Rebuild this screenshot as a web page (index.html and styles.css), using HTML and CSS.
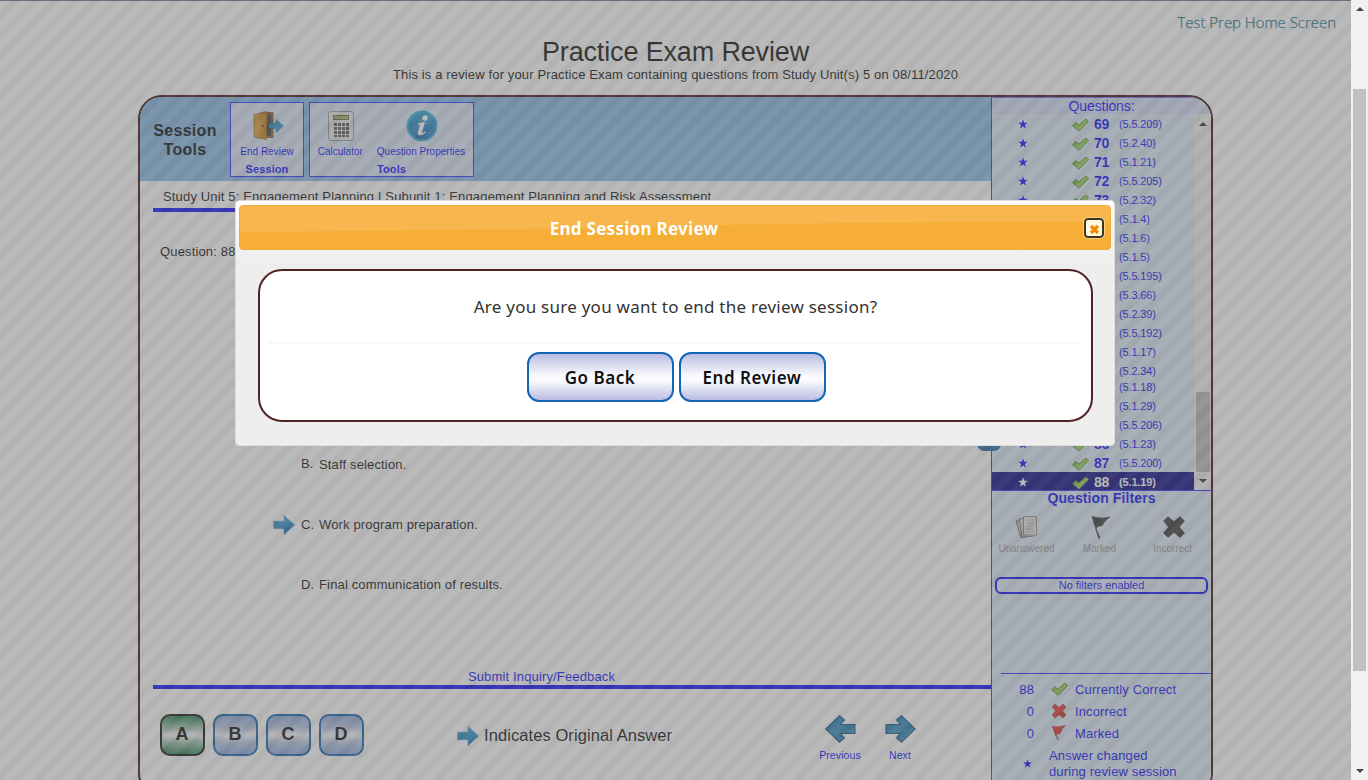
FILE: index.html
```html
<!DOCTYPE html>
<html lang="en">
<head>
<meta charset="utf-8">
<title>Practice Exam Review</title>
<link rel="stylesheet" href="styles.css">
</head>
<body>
<svg class="defs" width="0" height="0">
  <defs>
    <linearGradient id="gGreen" x1="0" y1="0" x2="1" y2="1"><stop offset="0" stop-color="#5fa02a"/><stop offset=".5" stop-color="#86cc40"/><stop offset="1" stop-color="#b5dc8c"/></linearGradient>
    <linearGradient id="gBlue" x1="0" y1="0" x2="0" y2="1"><stop offset="0" stop-color="#30a4dc"/><stop offset="1" stop-color="#1466b0"/></linearGradient>
    <linearGradient id="gDoor" x1="0" y1="0" x2="1" y2="0"><stop offset="0" stop-color="#e8a030"/><stop offset="1" stop-color="#c07818"/></linearGradient>
    <symbol id="check" viewBox="0 0 16 13"><path d="M.6 7.200 3.500 4.200 6.400 6.600 13.200.8 15.600 3.200 6.600 12.400z" fill="url(#gGreen)" stroke="#4a8428" stroke-width=".9" stroke-linejoin="round"/></symbol>
    <symbol id="star" viewBox="0 0 10 10"><path d="M5 .3 6.200 3.700 9.800 3.800 6.900 6 8 9.500 5 7.400 2 9.500 3.100 6 .2 3.800 3.800 3.700z" fill="currentColor"/></symbol>
    <symbol id="cross" viewBox="0 0 24 24"><path d="M1.500 6 6 1.500l6 5 6-5L22.500 6l-5 6 5 6-4.500 4.500-6-5-6 5L1.500 18l5-6z" fill="currentColor" stroke-linejoin="round" stroke="#000" stroke-opacity=".35" stroke-width="1"/></symbol>
    <symbol id="arrow" viewBox="0 0 22 20"><path d="M.8 6.300H11V.4L21.500 10 11 19.600v-5.900H.8z" fill="url(#gBlue)" stroke="#3c9cd4" stroke-width=".7"/></symbol>
    <symbol id="navarrow" viewBox="0 0 31 28"><path d="M1 9.500H15.500L11.500 5 16.500.8 30.200 14 16.500 27.200 11.500 23l4-4.500H1z" fill="#2080b4" stroke="#0c4c7c" stroke-width="1.100"/><path d="M2 14.500H29L16.500 26 13 23l4-5.500H2z" fill="#3aa0c8" fill-opacity=".3"/></symbol>
  </defs>
</svg>
<div class="page">
  <div class="top"><a class="home">Test Prep Home Screen</a></div>
  <h1>Practice Exam Review</h1>
  <p class="sub">This is a review for your Practice Exam containing questions from Study Unit(s) 5 on 08/11/2020</p>

  <div class="panel">
    <main class="main">
      <div class="toolbar">
        <div class="tt">Session<br>Tools</div>
        <div class="group g1">
          <div class="tools">
            <div class="tool"><svg width="32" height="32" viewBox="0 0 32 32"><path d="M9 2h12.500v26H9z" fill="#7a542c"/><path d="M14 5h5v21h-5z" fill="#41342c"/><path d="M2 4.500 14.500 1.500v28L2 27z" fill="url(#gDoor)" stroke="#9c6518" stroke-width=".8"/><circle cx="11" cy="16" r="1.300" fill="#70330c"/><path d="M17 13.500h7V9.500l7.500 6.500-7.500 6.500v-4h-7z" fill="#238cc8" stroke="#176ca0" stroke-width=".6"/></svg><span>End Review</span></div>
          </div>
          <b>Session</b>
        </div>
        <div class="group g2">
          <div class="tools">
            <div class="tool"><svg width="32" height="32" viewBox="0 0 32 32"><rect x="3.500" y="1.500" width="25" height="29" rx="2.500" fill="#e6e6e6" stroke="#939393"/><rect x="8.500" y="5.500" width="15" height="4" fill="#9cad59" stroke="#5c6630"/><g fill="#4c4c4c"><path d="M9 13h3v3H9zM13 13h3v3h-3zM17 13h3v3h-3zM21 13h3v3h-3zM9 17h3v3H9zM13 17h3v3h-3zM17 17h3v3h-3zM21 17h3v3h-3zM9 21h3v3H9zM13 21h3v3h-3zM17 21h3v3h-3zM21 21h3v3h-3zM9 25h3v2H9zM13 25h3v2h-3zM17 25h3v2h-3zM21 25h3v2h-3z"/></g></svg><span>Calculator</span></div>
            <div class="tool qp"><svg width="32" height="32" viewBox="0 0 32 32"><circle cx="16" cy="16" r="14.500" fill="url(#gBlue)" stroke="#2bb2dc" stroke-width="2"/><circle cx="19" cy="8" r="2.700" fill="#fff"/><path d="M12 13.500q4-1.700 7-1.500l-2.800 10.200q0 1.300 3.300-.9l.5 1.200q-7 5-8.500 1.300l2.500-9.300-2.300.1z" fill="#fff"/></svg><span>Question Properties</span></div>
          </div>
          <b>Tools</b>
        </div>
      </div>
      <div class="crumb">Study Unit 5: Engagement Planning | Subunit 1: Engagement Planning and Risk Assessment</div>
      <div class="content">
        <div class="qn">Question: 88</div>
        <div class="opt"><i></i><span class="l up">B.</span><span>Staff selection.</span></div>
        <div class="opt"><i><svg width="22" height="20"><use href="#arrow"/></svg></i><span class="l">C.</span><span>Work program preparation.</span></div>
        <div class="opt"><i></i><span class="l">D.</span><span>Final communication of results.</span></div>
        <div class="submit">Submit Inquiry/Feedback</div>
      </div>
      <div class="bottom">
        <div class="answers"><span class="ans sel">A</span><span class="ans">B</span><span class="ans">C</span><span class="ans">D</span></div>
        <div class="orig"><svg width="22" height="20"><use href="#arrow"/></svg><span>Indicates Original Answer</span></div>
        <div class="nav"><svg class="flip" width="31" height="28"><use href="#navarrow"/></svg><span>Previous</span></div>
        <div class="nav nx"><svg width="31" height="28"><use href="#navarrow"/></svg><span>Next</span></div>
      </div>
    </main>
    <aside class="side">
      <div class="qh">Questions:</div>
      <div class="listwrap">
        <div class="list" id="list"></div>
        <div class="sb"><span class="up-a"></span><span class="thumb"></span><span class="dn-a"></span></div>
      </div>
      <div class="filters">
        <b class="ft">Question Filters</b>
        <div class="fi">
          <div><svg width="26" height="24" viewBox="0 0 26 24"><path d="m2 6 10-3 5 18-10 2z" fill="#c2c2c2" stroke="#6f6f6f"/><path d="m5 4 12-2 3 19-12 1z" fill="#d0d0d0" stroke="#767676"/><path d="M9.500 1.500h13v18.500h-13z" fill="#e4e4e4" stroke="#888"/><path d="M12 5h8M12 8h8M12 11h8M12 14h8M12 17h8" stroke="#b4b4b4"/></svg><span>Unanswered</span></div>
          <div><svg width="24" height="24" viewBox="0 0 24 24"><path d="M4 1.500q9 3 18 .5-6 4-8 9-4-1-6 2.500l4 9.500-1.300.2z" fill="#303030" stroke="#202020" stroke-width=".6"/></svg><span>Marked</span></div>
          <div class="gx"><svg width="24" height="24"><use href="#cross"/></svg><span>Incorrect</span></div>
        </div>
        <div class="none">No filters enabled</div>
      </div>
      <div class="legend">
        <div><em>88</em><svg width="17" height="14"><use href="#check"/></svg><span>Currently Correct</span></div>
        <div><em>0</em><svg class="red" width="16" height="16"><use href="#cross"/></svg><span>Incorrect</span></div>
        <div><em>0</em><svg width="16" height="16" viewBox="0 0 16 16"><path d="m2 1 5 14" stroke="#9c7040" stroke-width="1.500"/><path d="M1.500 1.500q6 1 13-1-4 3-5.500 8-3-.5-4.500 2z" fill="#dc2020" stroke="#9a2020" stroke-width=".5"/></svg><span>Marked</span></div>
        <div class="chg"><em><svg width="9" height="9"><use href="#star"/></svg></em><span>Answer changed<br>during review session</span></div>
      </div>
    </aside>
    <span class="tab"></span>
  </div>
</div>
<div class="overlay"></div>
<section class="dialog">
  <header><svg class="wave" viewBox="0 0 872 45" preserveAspectRatio="none"><path d="M0 0H872V17Q650 16 436 21T0 27z" fill="#f8b64e"/></svg><h2>End Session Review</h2><button class="x"><svg width="11" height="11" viewBox="0 0 11 11"><path d="m2 2 7 7M9 2 2 9" stroke="#ef8c08" stroke-width="3.200"/></svg></button></header>
  <div class="box">
    <p>Are you sure you want to end the review session?</p>
    <div class="btns"><button>Go Back</button><button>End Review</button></div>
  </div>
</section>
<div class="scroll"><span class="s-up"></span><span class="s-thumb"></span><span class="s-dn"></span></div>
<script src="list.js"></script>
</body>
</html>
```
FILE: list.js
```js
const units = ["5.5.209", "5.2.40", "5.1.21", "5.5.205", "5.2.32", "5.1.4", "5.1.6", "5.1.5", "5.5.195", "5.3.66", "5.2.39", "5.5.192", "5.1.17", "5.2.34", "5.1.18", "5.1.29", "5.5.206", "5.1.23", "5.5.200", "5.1.19"];
document.getElementById("list").innerHTML = units.map((u, i) => {
  const n = 69 + i;
  const cls = n === 88 ? "row current" : n === 83 ? "row tight" : "row";
  return `<div class="${cls}"><svg class="st" width="10" height="10"><use href="#star"/></svg><svg class="ck" width="17" height="14"><use href="#check"/></svg><b>${n}</b><span>(${u})</span></div>`;
}).join("");
```
FILE: styles.css
```css
* { box-sizing: border-box; }
html, body { height: 780px; overflow: hidden; }
body { margin: 0; position: relative; background: #fff; font-family: "Liberation Sans", Arial, sans-serif; color: #000; }
.defs { position: absolute; }
svg { display: block; }
.page { width: 1351px; height: 780px; overflow: hidden; background: #fff; border-top: 1px solid #668; }
.top { height: 36px; padding: 11px 15px 0; text-align: right; }
.home { font: 400 15px/20px "Open Sans", sans-serif; letter-spacing: -.27px; color: #1c7492; font-weight: 300; letter-spacing: -.03px; -webkit-text-stroke: .25px #006486; }
h1 { margin: 0; text-align: center; font-weight: 400; font-size: 27px; line-height: 30px; letter-spacing: -.15px; }
.sub { margin: 0; text-align: center; font-size: 13px; line-height: 16px; letter-spacing: .14px; }
.panel { position: relative; margin: 12px 0 0 138px; width: 1075px; height: 702px; border: 2px solid #350404; border-radius: 24px; display: flex; overflow: hidden; }
.main { width: 851px; }
.toolbar { height: 84px; background: linear-gradient(#80b6e6, #84bae8); display: flex; padding: 5px 0 0 12px; }
.tt { width: 66px; margin-right: 12px; padding-top: 19px; text-align: center; font-weight: 700; font-size: 16px; line-height: 19px; letter-spacing: .3px; }
.group { height: 75px; border: 1px solid #2626ff; background: #dbe6fb; color: #00f; text-align: center; padding-top: 6px; }
.group b { display: block; font-size: 11px; line-height: 14px; letter-spacing: .1px; margin-top: 4px; }
.g1 { width: 74px; margin-right: 5px; }
.g2 { width: 165px; }
.tools { display: flex; justify-content: center; }
.tool { display: flex; flex-direction: column; align-items: center; font-size: 10px; line-height: 13px; white-space: nowrap; }
.tool span { margin-top: 4px; }
.tool svg { position: relative; left: 1px; top: 1px; }
.qp { margin-left: 14px; }
.crumb { margin-left: 13px; height: 31px; padding: 8px 10px 0; border-bottom: 4px solid #00f; font-size: 13px; line-height: 16px; letter-spacing: .16px; white-space: nowrap; }
.content { margin-left: 13px; height: 477px; border-bottom: 4px solid #00f; font-size: 13px; letter-spacing: .15px; line-height: 16px; }
.qn { padding: 32px 0 0 7px; height: 223px; }
.opt { display: flex; align-items: center; height: 60px; padding-left: 120px; }
.opt i { width: 28px; }
.opt .l { width: 18px; }
.opt .up { padding-bottom: 3px; }
.submit { text-align: center; color: #00f; padding: 54px 61px 0 0; }
.bottom { display: flex; padding: 25px 0 0 19.500px; height: 90px; }
.answers { display: flex; gap: 8px; width: 297.500px; }
.ans { width: 45px; height: 42px; border: 2px solid #0c5aa8; border-radius: 10px; background: linear-gradient(#85a6dd, #b7c6e6 30%, #fafaff 50%, #b7c6e6 70%, #85a6dd); font-weight: 700; font-size: 18px; line-height: 37px; text-align: center; }
.sel { border-color: #060606; background: linear-gradient(#1d7b49, #a5c5af 33%, #fafaff 50%, #a5c5af 68%, #1d7b49); }
.orig { display: flex; gap: 5px; height: 43px; align-items: center; width: 358px; font-size: 16.500px; letter-spacing: .08px; }
.nav { display: flex; flex-direction: column; align-items: center; width: 50px; padding-top: 1px; color: #00f; font-size: 10.500px; line-height: 14px; letter-spacing: .1px; }
.nx { margin-left: 10px; }
.nav span { margin-top: 5px; }
.flip { transform: scaleX(-1); }
.side { width: 220px; border-left: 1px solid #2626ff; background: #dceaf8; color: #00f; }
.qh { height: 17px; background: #d5defa; border-top: 1px solid #6a6aff; text-align: center; font-size: 14px; line-height: 16px; letter-spacing: -.1px; }
.listwrap { display: flex; height: 377px; border-bottom: 1px solid #2626ff; }
.list { width: 202px; overflow: hidden; }
.row { height: 19px; display: flex; align-items: center; color: #00f; }
.tight { margin-top: -3px; }
.current { background: #000080; color: #fff; font-weight: 700; height: 20px; }
.st { margin-left: 25.500px; }
.ck { margin: 2px 0 0 44.500px; }
.row b { width: 25px; margin-left: 5px; font-size: 14px; letter-spacing: -.2px; }
.row span { font-size: 11px; letter-spacing: -.15px; }
.sb { width: 17px; background: #f1f1f1; display: flex; flex-direction: column; align-items: center; }
.up-a { margin-top: 8px; border: 4px solid transparent; border-top: 0; border-bottom-color: #222; }
.thumb { margin-top: 266px; width: 14px; height: 80px; background: #b8b8b8; }
.dn-a { margin-top: 7px; border: 4px solid transparent; border-bottom: 0; border-top-color: #222; }
.filters { height: 182px; padding: 0 3px; text-align: center; }
.ft { display: block; font-size: 14px; line-height: 15px; letter-spacing: .1px; }
.fi { display: grid; grid-template-columns: repeat(3, 73px); justify-content: center; padding: 9px 4px 0 0; color: #979797; font-size: 10px; }
.fi div { display: flex; flex-direction: column; align-items: center; line-height: 12px; }
.fi span { margin-top: 4px; }
.gx svg { color: #303030; position: relative; left: 1px; }
.none { margin-top: 22px; height: 17px; border: 2px solid #00f; border-radius: 6px; background: #e2ebfa; font-size: 11px; line-height: 13px; letter-spacing: 0; }
.legend { margin-left: 9px; border-top: 1px solid #2626ff; padding-top: 4px; font-size: 13px; letter-spacing: .13px; }
.legend > div { display: grid; grid-template-columns: 33px 41px 1fr; align-items: center; height: 22px; }
.legend em { font-style: normal; text-align: right; }
.legend svg { justify-self: center; margin-left: 9px; }
.legend .red { color: #e02828; }
.legend > .chg { grid-template-columns: 48px 1fr; height: 38px; padding-top: 1px; line-height: 16px; white-space: nowrap; }
.legend > .chg em svg { margin-left: 22px; }
.tab { position: absolute; left: 837px; top: 341px; width: 24px; height: 13px; background: #1c64a8; border-radius: 0 0 7px 7px; }
.overlay { position: absolute; left: 0; top: 0; width: 1351px; height: 780px; background: repeating-linear-gradient(-45deg, rgba(116,116,116,.5) 0 7px, rgba(102,102,102,.5) 8px 13.200px, rgba(116,116,116,.5) 14.142px); }
.dialog { position: absolute; left: 235px; top: 200px; width: 880px; height: 246px; padding: 4px; border: 1px solid #ddd; border-radius: 4px; background: linear-gradient(#fff 0, #f8f8f8 18px, #eee 60px); font-family: "Trebuchet MS", "Noto Sans", sans-serif; }
.dialog header { position: relative; height: 45px; width: 872px; margin-left: -1px; border: 1px solid #f3aa3a; border-radius: 4px; background: #f6ae36; overflow: hidden; }
.wave { position: absolute; left: 0; top: 0; width: 100%; height: 100%; }
h2 { position: relative; margin: 0; padding-right: 82px; color: #fff; text-align: center; font-size: 17px; line-height: 45px; font-weight: 700; letter-spacing: .28px; }
.x { position: absolute; right: 6px; top: 12px; width: 20px; height: 20px; padding: 2px 0 0 3px; border: 2px solid #3c3520; border-radius: 4px; background: #fff8df; outline: 1px solid #f9cf82; }
.box { margin: 19px 0 0 18px; width: 835px; height: 153px; border: 2px solid #502424; border-radius: 24px; background: #fff; }
.box p { margin: 0 12px 0 8px; height: 73px; border-bottom: 2px solid #f7f7f7; text-align: center; font-size: 17px; line-height: 72px; letter-spacing: .25px; padding-left: 4px; color: #333; }
.btns { display: flex; justify-content: center; gap: 5px; padding: 8px 0 0 1px; }
.btns button { width: 147px; height: 50px; border: 2px solid #1465b5; border-radius: 12px; padding: 0; background: linear-gradient(#b9bce2, #fbfbff 48%, #fbfbff 58%, #b9bce2); font: 600 17px "Trebuchet MS", "Noto Sans", sans-serif; letter-spacing: .5px; color: #111; }
.scroll { position: absolute; right: 0; top: 0; width: 17px; height: 780px; background: #f1f1f1; display: flex; flex-direction: column; align-items: center; }
.s-up { margin-top: 7px; border: 4px solid transparent; border-top: 0; border-bottom-color: #444; }
.s-thumb { margin-top: 78px; width: 13px; height: 582px; background: #c1c1c1; }
.s-dn { margin-top: 98px; border: 4px solid transparent; border-bottom: 0; border-top-color: #444; }
.legend > .chg em svg { margin-left: 22px; }
.legend > .chg em { display: flex; }
```
